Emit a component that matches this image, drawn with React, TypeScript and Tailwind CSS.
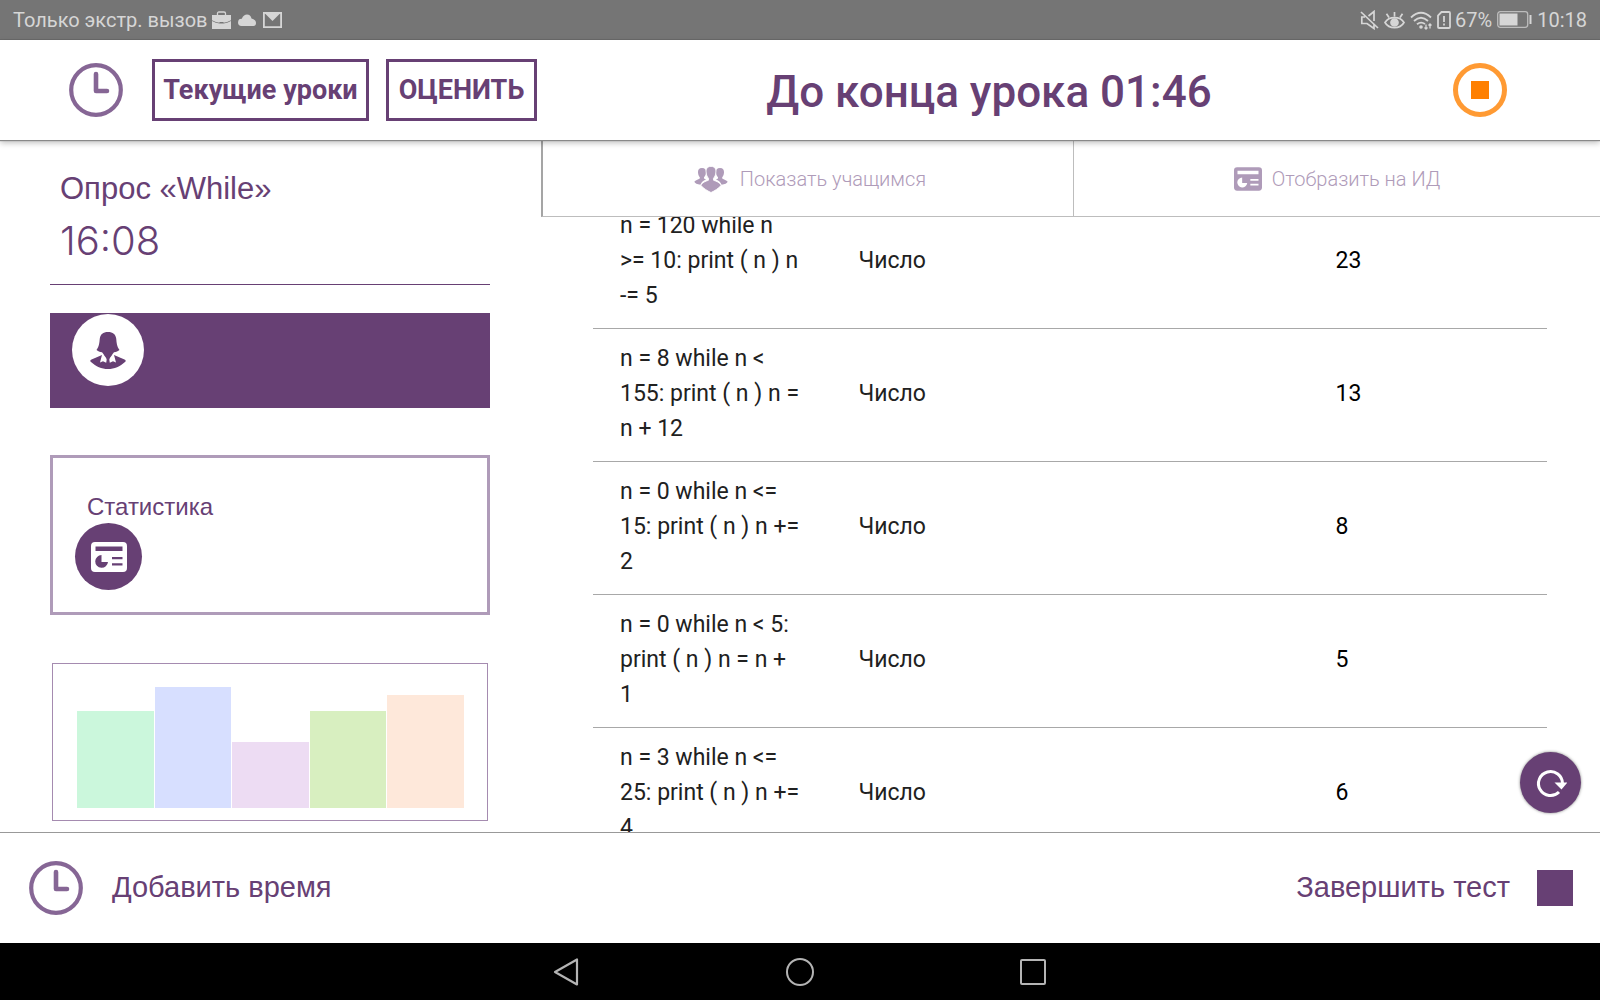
// App.tsx
import React, { useLayoutEffect, useRef } from "react";

type Question = {
    text: string;
    kind: string;
    answer: string;
};

const questions: Question[] = [
    { text: "n = 120 while n >= 10: print ( n ) n -= 5", kind: "Число", answer: "23" },
    { text: "n = 8 while n < 155: print ( n ) n = n + 12", kind: "Число", answer: "13" },
    { text: "n = 0 while n <= 15: print ( n ) n += 2", kind: "Число", answer: "8" },
    { text: "n = 0 while n < 5: print ( n ) n = n + 1", kind: "Число", answer: "5" },
    { text: "n = 3 while n <= 25: print ( n ) n += 4", kind: "Число", answer: "6" },
];

const bars = [
    { height: 97, color: "bg-[#cbf7dc]" },
    { height: 121, color: "bg-[#d7dfff]" },
    { height: 66, color: "bg-[#eddcf3]" },
    { height: 97, color: "bg-[#d8efc0]" },
    { height: 113, color: "bg-[#fee8da]" },
];

const ClockIcon: React.FC = () => (
    <svg className="size-[54px] shrink-0" viewBox="0 0 54 54" fill="none" stroke="#866695" aria-hidden="true">
        <circle cx="27" cy="27" r="24.8" strokeWidth="4.2" />
        <path d="M27 11v17h11" strokeWidth="4.6" strokeLinecap="round" strokeLinejoin="round" />
    </svg>
);

// Card with a pie and two lines, the inner shapes are cut out
const BoardIcon: React.FC<{ className: string }> = ({ className }) => (
    <svg className={className} viewBox="0 0 36 30" fill="currentColor" aria-hidden="true">
        <path
            fillRule="evenodd"
            d="M4 0h28a4 4 0 0 1 4 4v22a4 4 0 0 1-4 4H4a4 4 0 0 1-4-4V4a4 4 0 0 1 4-4ZM4.500 4.500v4.500h27V4.500ZM10.500 13a6.400 6.400 0 1 0 6.500 7h-6.500ZM21 15v2.300h10.500v-2.300ZM21 21.200v2.300h10.500v-2.300Z"
        />
    </svg>
);

const PeopleIcon: React.FC = () => (
    <svg className="h-[27px] w-[34px]" viewBox="0 0 34 27" fill="currentColor" aria-hidden="true">
        <path d="M8 2c3 0 4.200 2 4 4.500-.2 2.500-1.200 4-2 4.800v1.200l2 1c-3 1.200-5 3-5.500 5.300C3 18.300 1 17.300.3 15.800c1.200-1.600 3.700-2.400 5.500-3.300v-1.200C5 10.500 4.200 9 4 6.500 3.800 4 5 2 8 2Z" />
        <path d="M26 2c-3 0-4.200 2-4 4.500.2 2.500 1.200 4 2 4.800v1.200l-2 1c3 1.200 5 3 5.500 5.300 3.500-.5 5.500-1.500 6.200-3-1.200-1.600-3.700-2.400-5.500-3.300v-1.200c.8-.8 1.600-2.300 1.800-4.800C30.200 4 29 2 26 2Z" />
        <path
            stroke="#fff"
            strokeWidth="0.800"
            d="M17 .4c3.700 0 5.200 2.600 4.900 5.600-.2 3-1.200 5-2.400 6.200v2c2.600 1.200 6.200 2 7.700 5.100-2.800 3.200-6.500 5.500-10.200 7.200-3.700-1.700-7.400-4-10.200-7.200 1.500-3.100 5.100-3.900 7.700-5.100v-2c-1.200-1.200-2.200-3.200-2.400-6.200C11.800 3 13.300.4 17 .4Z"
        />
    </svg>
);

const StudentIcon: React.FC = () => (
    <svg className="h-[38px] w-9" viewBox="0 0 36 38" aria-hidden="true">
        <path fill="#674074" d="M12 24 1.500 28.500c-1.500.8-1.500 1.700-.5 2.500C6 35.500 11.500 38 18 38s12-2.500 17-7c1-.8 1-1.700-.5-2.500L24 24Z" />
        <path fill="#fff" d="m12.500 22-2.500 9.500 3-1.300 3.200 1.500.8-5Zm11 0 2.500 9.500-3-1.300-3.200 1.500-.8-5Z" />
        <path fill="#674074" d="M18 1c-5 0-7.500 2.200-8.200 6.500C9.300 12 9.300 15 6.500 19c1.500 1.300 3.200 2 5.500 2.300 1.500 2 3.500 4.500 5 7.500V31h2v-2.200c1.500-3 3.500-5.500 5-7.500 2.300-.3 4-1 5.500-2.300-2.800-4-2.800-7-3.300-11.500C25.500 3.200 23 1 18 1Z" />
    </svg>
);

const StatusBar: React.FC = () => (
    <div className="flex h-10 shrink-0 items-center justify-between border-b border-[#6a6a6a] bg-[#757575] px-[13px] text-xl text-[#d6d6d6]">
        <div className="flex items-center gap-[7px]">
            <div className="flex items-center gap-1">
                <span>Только экстр. вызов</span>
                <svg className="h-[18px] w-[19px]" viewBox="0 0 19 18" fill="currentColor" aria-hidden="true">
                    <path fill="none" stroke="currentColor" strokeWidth="1.300" d="M5.500 4V2.500Q5.500 1 7 1h5Q13.500 1 13.500 2.500V4" />
                    <path d="M0 4h19v5.200q-4 2.300-7.500 2.600V11h-4v.8Q4 11.500 0 9.200Z" />
                    <path d="M0 10q4 2.300 7.500 2.600h4Q15 12.300 19 10V18H0Z" />
                </svg>
            </div>
            <svg className="h-3 w-[18px]" viewBox="0 0 18 12" fill="currentColor" aria-hidden="true">
                <path d="M3.500 12a3.600 3.600 0 0 1 .3-7.200C5 1.500 7 .5 9 .5c2.300 0 4 1.500 4.500 4C16.500 5 18 7 18 9c0 2-1 3-2.500 3Z" />
            </svg>
            <svg className="h-4 w-[19px]" viewBox="0 0 19 16" aria-hidden="true">
                <path fill="none" stroke="currentColor" strokeWidth="1.800" d="M.9.900h17.200v14.200H.9Z" />
                <path fill="currentColor" d="M1.500 1h16l-8 8Z" />
            </svg>
        </div>
        <div className="flex items-center gap-[5px]">
            <svg className="h-5 w-[19px]" viewBox="0 0 19 20" fill="none" stroke="currentColor" strokeWidth="1.700" aria-hidden="true">
                <path d="M1 2l17 16M8.500 6 14 1.500v9.500M14 14v4.500L7 13.500H1.800V7H5" />
            </svg>
            <svg className="h-5 w-[21px]" viewBox="0 0 21 20" fill="none" stroke="currentColor" strokeWidth="1.700" aria-hidden="true">
                <path d="M1 12.500C5 6 16 6 20 12.500 16 19.500 5 19.500 1 12.500ZM10.500 6.500V2M5 7.500 2.500 3.800M16 7.500l2.500-3.700" />
                <circle cx="10.500" cy="12.500" r="3.500" fill="currentColor" />
            </svg>
            <svg className="h-5 w-[22px]" viewBox="0 0 22 20" fill="none" stroke="currentColor" strokeWidth="1.800" aria-hidden="true">
                <path d="M1 7.500Q11-2 21 7.500M4 11Q11 4.500 18 11M7 14.300Q11 11 15 14" />
                <circle cx="11" cy="17" r="1.800" fill="currentColor" stroke="none" />
                <path strokeWidth="1.300" d="M16 14.500v4.500M20 14v4.500M14.500 17.500 16 19l1.500-1.500M18.500 15.500 20 14l1.500 1.500" />
            </svg>
            <div className="flex items-center gap-1">
                <svg className="h-[18px] w-[14px]" viewBox="0 0 14 18" fill="none" stroke="currentColor" strokeWidth="1.800" aria-hidden="true">
                    <path d="M4.500 1H12q1 0 1 1v14q0 1-1 1H2q-1 0-1-1V4.500ZM7 5v6M7 12.500v2" />
                </svg>
                <span>67%</span>
            </div>
            <svg className="h-[17px] w-[35px]" viewBox="0 0 35 17" aria-hidden="true">
                <rect x=".7" y=".7" width="30" height="15.600" rx="2.500" fill="none" stroke="#bcbcbc" strokeWidth="1.300" />
                <rect x="2.500" y="2.500" width="18" height="12" fill="currentColor" />
                <rect x="32.500" y="4" width="2" height="9" fill="currentColor" />
            </svg>
            <span>10:18</span>
        </div>
    </div>
);

const Header: React.FC = () => (
    <header className="z-10 flex h-[100px] shrink-0 items-center bg-white shadow-[0_1px_1px_#888,0_3px_6px_rgba(0,0,0,0.25)]">
        <div className="flex w-[541px] shrink-0 items-center pl-[69px] text-[27px] font-bold">
            <ClockIcon />
            <button className="ml-[29px] h-[62px] w-[217px] border-3 border-[#674074] pt-px whitespace-nowrap">Текущие уроки</button>
            <button className="ml-[17px] h-[62px] w-[151px] border-3 border-[#674074] pt-px">ОЦЕНИТЬ</button>
        </div>
        <h1 className="flex-1 pt-1 pr-4 text-center text-[44px] font-medium">До конца урока 01:46</h1>
        <button className="mr-[93px] flex size-[54px] items-center justify-center rounded-full border-[5px] border-[#ff9a33]" aria-label="Остановить урок">
            <span className="size-[18px] bg-[#ff8000]" />
        </button>
    </header>
);

const Sidebar: React.FC = () => (
    <aside className="w-[541px] shrink-0 pr-[51px] pl-[50px] font-['Liberation_Sans',sans-serif]">
        <div className="border-b border-[#674074] px-[10px] pt-7 pb-4">
            <h2 className="text-[31px] leading-[42px]">Опрос «While»</h2>
            <p className="pt-1 font-['Inter',sans-serif] text-[40px] leading-[54px] font-light">16:08</p>
        </div>
        <div className="mt-7 h-[95px] bg-[#674074] px-[22px] pt-px">
            <div className="flex size-[72px] items-center justify-center rounded-full bg-white">
                <StudentIcon />
            </div>
        </div>
        <div className="mt-[47px] h-[160px] border-3 border-[#af9bb9] px-[22px] pt-8">
            <h3 className="px-3 text-2xl leading-[33px]">Статистика</h3>
            <button className="flex size-[67px] items-center justify-center rounded-full bg-[#674074] text-white" aria-label="Статистика">
                <BoardIcon className="h-[30px] w-9" />
            </button>
        </div>
        <div className="mx-[2px] mt-12 flex h-[158px] items-end gap-px border border-[#a58bb0] pr-[23px] pb-3 pl-6">
            {bars.map((bar, i) => (
                <div key={i} className={`flex-1 ${bar.color}`} style={{ height: bar.height }} />
            ))}
        </div>
    </aside>
);

const QuestionList: React.FC = () => {
    const listRef = useRef<HTMLDivElement>(null);

    // the list opens slightly scrolled, the first row goes under the tabs
    useLayoutEffect(() => {
        if (listRef.current) listRef.current.scrollTop = 21;
    }, []);

    return (
        <div ref={listRef} className="min-h-0 flex-1 overflow-y-auto pr-[53px] pl-[52px] [scrollbar-width:none]">
            <table className="w-full table-fixed text-left text-[23px] leading-[35px] text-[#212121]">
                <colgroup>
                    <col className="w-1/4" />
                    <col className="w-1/2" />
                    <col className="w-1/4" />
                </colgroup>
                <tbody>
                    {questions.map((q) => (
                        <tr key={q.text} className="border-b border-[#a8a8a8]">
                            <td className="pt-3 pr-[30px] pb-[15px] pl-[27px]">{q.text}</td>
                            <td className="px-[27px] pt-3 pb-[15px]">{q.kind}</td>
                            <td className="px-[27px] pt-3 pb-[15px] text-black">{q.answer}</td>
                        </tr>
                    ))}
                </tbody>
            </table>
        </div>
    );
};

const App: React.FC = () => {
    return (
        <div className="flex h-screen flex-col overflow-hidden bg-white font-['Roboto',sans-serif] text-[#674074]">
            <StatusBar />
            <Header />

            <main className="relative flex min-h-0 flex-1">
                <Sidebar />
                <section className="flex min-w-0 flex-1 flex-col">
                    <div className="flex h-[77px] shrink-0 border-b border-l-2 border-b-[#bdbdbd] border-l-[#a5a5a5] text-xl font-light text-[#af9bb9]">
                        <button className="flex flex-1 items-center justify-center gap-3 border-r border-[#bdbdbd] pt-[2px] pl-1">
                            <PeopleIcon />
                            Показать учащимся
                        </button>
                        <button className="flex flex-1 items-center justify-center gap-[10px] pt-[2px]">
                            <BoardIcon className="h-6 w-7" />
                            Отобразить на ИД
                        </button>
                    </div>
                    <QuestionList />
                </section>
                <button
                    className="absolute right-[19px] bottom-[19px] flex size-[61px] items-center justify-center rounded-full bg-[#674074] shadow-[0_0_3px_rgba(0,0,0,0.5)]"
                    aria-label="Обновить"
                >
                    <svg className="size-8" viewBox="0 0 32 32" fill="none" stroke="#fff" strokeWidth="3" aria-hidden="true">
                        <path d="M27.500 16.500a12 12 0 1 0-3.500 8.500" />
                        <path fill="#fff" stroke="none" d="M19.500 15.500h13L26.500 22.500Z" />
                    </svg>
                </button>
            </main>

            <footer className="flex h-[111px] shrink-0 items-center justify-between border-t border-[#999] pr-[27px] pl-[29px] font-['Liberation_Sans',sans-serif] text-[29px]">
                <button className="flex items-center gap-[29px]">
                    <ClockIcon />
                    Добавить время
                </button>
                <button className="flex items-center gap-[27px]">
                    Завершить тест
                    <span className="size-9 bg-[#674074]" />
                </button>
            </footer>

            <nav className="flex h-[57px] shrink-0 items-center justify-center gap-[206px] bg-black pr-[2px] text-[#b4b4b4]">
                <button aria-label="Назад">
                    <svg className="size-7" viewBox="0 0 28 28" fill="none" stroke="currentColor" strokeWidth="2.200" strokeLinejoin="round" aria-hidden="true">
                        <path d="M25 1.500v25L3 14Z" />
                    </svg>
                </button>
                <button className="size-7 rounded-full border-2 border-current" aria-label="Домой" />
                <button className="size-[26px] rounded-xs border-2 border-current" aria-label="Недавние" />
            </nav>
        </div>
    );
};

export default App;
